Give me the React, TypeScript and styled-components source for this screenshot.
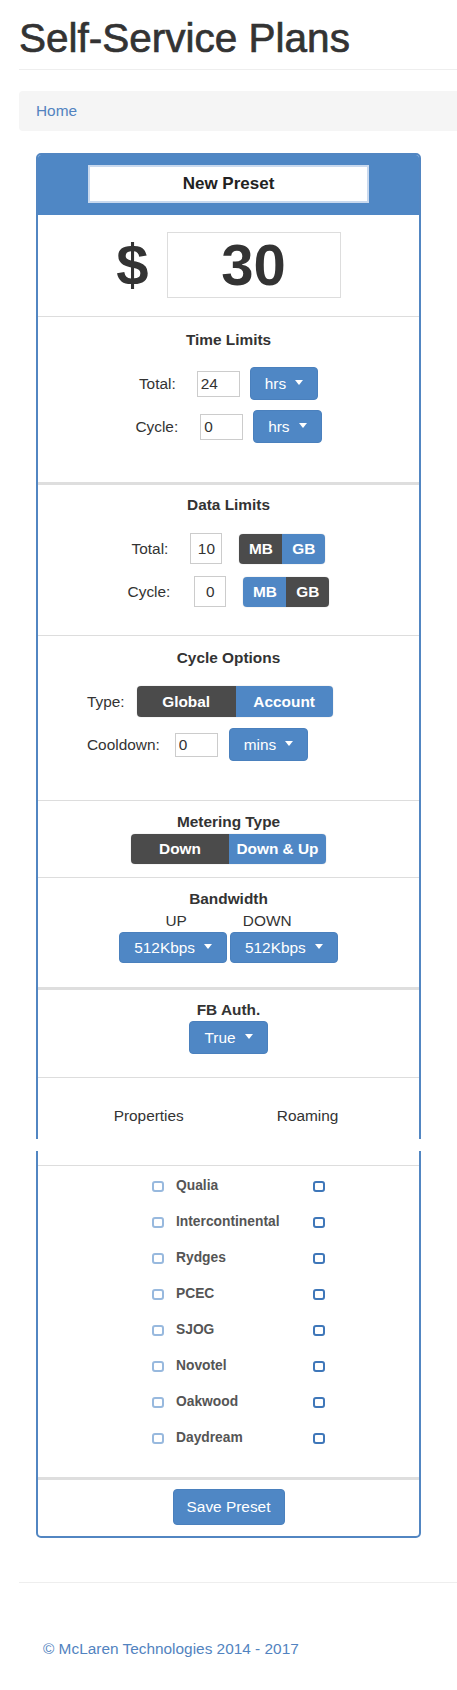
import React from "react";
import styled, { createGlobalStyle } from "styled-components";

const BLUE = "#4f87c5";
const DARK = "#4b4b4b";

const Global = createGlobalStyle`
  html, body { margin: 0; padding: 0; background: #fff; }
  body {
    font-family: "Liberation Sans", Arial, Helvetica, sans-serif;
    font-size: 15.4px;
    line-height: 22px;
    color: #333;
  }
  * { box-sizing: border-box; }
`;

const Page = styled.div`
  width: 457px;
  overflow: hidden;
  padding-bottom: 31px;
`;

const Header = styled.header`
  padding-left: 19px;
`;

const Title = styled.h1`
  margin: 16px 0 0;
  padding-bottom: 9px;
  border-bottom: 1px solid #eee;
  font-size: 40.5px;
  line-height: 44px;
  font-weight: 400;
  color: #333;
  -webkit-text-stroke: 0.7px #333;
`;

const Breadcrumb = styled.nav`
  margin-top: 21px;
  height: 40px;
  padding: 0 17px;
  display: flex;
  align-items: center;
  background: #f5f5f5;
  border-radius: 4px 0 0 4px;
`;

const Link = styled.a`
  color: #5283c0;
  text-decoration: none;
`;

const Panel = styled.section`
  width: 385px;
  margin: 22px auto 0;
  border: 2px solid #5286c2;
  border-radius: 5px;
  background: #fff;
`;

const PanelHeader = styled.div`
  background: ${BLUE};
  padding: 10px 0 12px;
  display: flex;
  justify-content: center;
  border-radius: 3px 3px 0 0;
`;

const NameInput = styled.input`
  width: 281px;
  height: 38px;
  border: 2px solid #c9d9ee;
  background: #fff;
  text-align: center;
  font-family: inherit;
  font-weight: 700;
  font-size: 17px;
  color: #222;
  outline: none;
`;

const PriceSection = styled.div`
  padding: 17px 0 18px;
  display: flex;
  justify-content: center;
  align-items: center;
  gap: 18px;
  border-bottom: 1px solid #ddd;
`;

const Dollar = styled.span`
  font-size: 58px;
  line-height: 66px;
  font-weight: 700;
  color: #333;
`;

const PriceBox = styled.div`
  width: 174px;
  height: 66px;
  border: 1px solid #ddd;
  display: flex;
  align-items: center;
  justify-content: center;
  font-size: 58px;
  font-weight: 700;
  color: #333;
`;

const Section = styled.div<{ $top: number; $bottom: number; $thick?: boolean; $first?: boolean }>`
  border-top: ${(p) => (p.$first ? "none" : p.$thick ? "3px solid #dedede" : "1px solid #ddd")};
  padding: ${(p) => p.$top}px 0 ${(p) => p.$bottom}px;
  display: flex;
  flex-direction: column;
  align-items: stretch;
`;

const SectionTitle = styled.h4`
  margin: 0;
  font-size: 15.4px;
  line-height: 22px;
  font-weight: 700;
  text-align: center;
  color: #333;
`;

const Row = styled.div<{ $mt: number; $left?: number }>`
  margin-top: ${(p) => p.$mt}px;
  display: flex;
  align-items: center;
  justify-content: ${(p) => (p.$left !== undefined ? "flex-start" : "center")};
  padding-left: ${(p) => p.$left ?? 0}px;
`;

const Label = styled.span<{ $gap: number }>`
  margin-right: ${(p) => p.$gap}px;
`;

const SmallInput = styled.input<{ $w: number; $h: number; $center?: boolean; $gap: number }>`
  width: ${(p) => p.$w}px;
  height: ${(p) => p.$h}px;
  margin-right: ${(p) => p.$gap}px;
  border: 1px solid #ccc;
  padding: 0 3px;
  font-family: inherit;
  font-size: 15.4px;
  color: #333;
  text-align: ${(p) => (p.$center ? "center" : "left")};
  outline: none;
  background: #fff;
`;

const DropButton = styled.button<{ $h?: number }>`
  height: ${(p) => p.$h ?? 33}px;
  padding: 0 14px;
  display: inline-flex;
  align-items: center;
  gap: 9px;
  border: 1px solid #4a80bd;
  border-radius: 4px;
  background: ${BLUE};
  color: #fff;
  font-family: inherit;
  font-size: 15.4px;
  cursor: pointer;
`;

const Caret = styled.span`
  width: 0;
  height: 0;
  border-top: 5px solid #fff;
  border-left: 4.5px solid transparent;
  border-right: 4.5px solid transparent;
  margin-top: -2px;
`;

const ToggleGroup = styled.div`
  display: inline-flex;
  border-radius: 4px;
  overflow: hidden;
  box-shadow: 0 0 1px rgba(0, 0, 0, 0.35);
`;

const ToggleBtn = styled.button<{ $active?: boolean; $w: number; $h: number }>`
  width: ${(p) => p.$w}px;
  height: ${(p) => p.$h}px;
  border: none;
  padding: 0;
  background: ${(p) => (p.$active ? BLUE : DARK)};
  color: #fff;
  font-family: inherit;
  font-weight: 700;
  font-size: 15.4px;
`;

const SubLabels = styled.div`
  display: flex;
  justify-content: center;
  gap: 56px;
`;

const ButtonPair = styled.div`
  display: flex;
  justify-content: center;
  gap: 3px;
`;

const Centered = styled.div`
  display: flex;
  justify-content: center;
`;

const PropHeader = styled.div`
  border-top: 1px solid #ddd;
  padding: 27px 5px 12px 0;
  display: flex;
  justify-content: center;
  gap: 93px;
`;

const BorderGap = styled.div`
  height: 12px;
  margin: 0 -2px 14px;
  background: #fff;
`;

const PropList = styled.div`
  border-top: 1px solid #ddd;
  padding: 2px 0 21px 114px;
`;

const PropRow = styled.div`
  height: 36px;
  display: grid;
  grid-template-columns: 161px 12px;
  align-items: center;
`;

const PropCell = styled.div`
  display: flex;
  align-items: center;
  gap: 12px;
`;

const Check = styled.span<{ $strong?: boolean }>`
  width: 12px;
  height: 11px;
  border-radius: 3px;
  border: ${(p) => (p.$strong ? "2px solid #3f77b9" : "2px solid #98b9de")};
  background: #fff;
`;

const PropName = styled.span`
  font-weight: 700;
  font-size: 13.8px;
  color: #555;
`;

const SaveSection = styled.div`
  border-top: 3px solid #dedede;
  padding: 9px 0 11px;
  display: flex;
  justify-content: center;
`;

const SaveButton = styled.button`
  width: 112px;
  height: 36px;
  border: 1px solid #4a80bd;
  border-radius: 4px;
  background: ${BLUE};
  color: #fff;
  font-family: inherit;
  font-size: 15.4px;
`;

const FooterRule = styled.hr`
  margin: 44px 0 0 19px;
  border: none;
  border-top: 1px solid #eee;
`;

const FooterText = styled.p`
  margin: 55px 0 0;
  padding-left: 43px;
  color: #5283c0;
`;

const properties = [
  "Qualia",
  "Intercontinental",
  "Rydges",
  "PCEC",
  "SJOG",
  "Novotel",
  "Oakwood",
  "Daydream",
];

const Drop = ({ label, h }: { label: string; h?: number }) => (
  <DropButton $h={h}>
    {label}
    <Caret />
  </DropButton>
);

export default function App() {
  return (
    <Page>
      <Global />
      <Header>
        <Title>Self-Service Plans</Title>
        <Breadcrumb>
          <Link href="#">Home</Link>
        </Breadcrumb>
      </Header>

      <Panel>
        <PanelHeader>
          <NameInput value="New Preset" readOnly />
        </PanelHeader>

        <PriceSection>
          <Dollar>$</Dollar>
          <PriceBox>30</PriceBox>
        </PriceSection>

        <Section $first $top={12} $bottom={39}>
          <SectionTitle>Time Limits</SectionTitle>
          <Row $mt={16}>
            <Label $gap={21}>Total:</Label>
            <SmallInput $w={43} $h={26} $gap={10} value="24" readOnly />
            <Drop label="hrs" />
          </Row>
          <Row $mt={10}>
            <Label $gap={22}>Cycle:</Label>
            <SmallInput $w={43} $h={26} $gap={10} value="0" readOnly />
            <Drop label="hrs" />
          </Row>
        </Section>

        <Section $thick $top={9} $bottom={28}>
          <SectionTitle>Data Limits</SectionTitle>
          <Row $mt={17}>
            <Label $gap={22}>Total:</Label>
            <SmallInput $w={32} $h={31} $gap={17} $center value="10" readOnly />
            <ToggleGroup>
              <ToggleBtn $w={43} $h={30}>MB</ToggleBtn>
              <ToggleBtn $w={43} $h={30} $active>GB</ToggleBtn>
            </ToggleGroup>
          </Row>
          <Row $mt={12}>
            <Label $gap={24}>Cycle:</Label>
            <SmallInput $w={32} $h={31} $gap={17} $center value="0" readOnly />
            <ToggleGroup>
              <ToggleBtn $w={43} $h={30} $active>MB</ToggleBtn>
              <ToggleBtn $w={43} $h={30}>GB</ToggleBtn>
            </ToggleGroup>
          </Row>
        </Section>

        <Section $top={11} $bottom={39}>
          <SectionTitle>Cycle Options</SectionTitle>
          <Row $mt={17} $left={49}>
            <Label $gap={12}>Type:</Label>
            <ToggleGroup>
              <ToggleBtn $w={99} $h={31}>Global</ToggleBtn>
              <ToggleBtn $w={97} $h={31} $active>Account</ToggleBtn>
            </ToggleGroup>
          </Row>
          <Row $mt={11} $left={49}>
            <Label $gap={15}>Cooldown:</Label>
            <SmallInput $w={43} $h={24} $gap={11} value="0" readOnly />
            <Drop label="mins" />
          </Row>
        </Section>

        <Section $top={10} $bottom={13}>
          <SectionTitle>Metering Type</SectionTitle>
          <Row $mt={1}>
            <ToggleGroup>
              <ToggleBtn $w={98} $h={30}>Down</ToggleBtn>
              <ToggleBtn $w={97} $h={30} $active>Down &amp; Up</ToggleBtn>
            </ToggleGroup>
          </Row>
        </Section>

        <Section $top={10} $bottom={24}>
          <SectionTitle>Bandwidth</SectionTitle>
          <SubLabels>
            <span>UP</span>
            <span>DOWN</span>
          </SubLabels>
          <ButtonPair>
            <Drop label="512Kbps" h={31} />
            <Drop label="512Kbps" h={31} />
          </ButtonPair>
        </Section>

        <Section $thick $top={9} $bottom={23}>
          <SectionTitle>FB Auth.</SectionTitle>
          <Centered>
            <Drop label="True" />
          </Centered>
        </Section>

        <PropHeader>
          <span>Properties</span>
          <span>Roaming</span>
        </PropHeader>
        <BorderGap />

        <PropList>
          {properties.map((name) => (
            <PropRow key={name}>
              <PropCell>
                <Check />
                <PropName>{name}</PropName>
              </PropCell>
              <Check $strong />
            </PropRow>
          ))}
        </PropList>

        <SaveSection>
          <SaveButton>Save Preset</SaveButton>
        </SaveSection>
      </Panel>

      <FooterRule />
      <FooterText>© McLaren Technologies 2014 - 2017</FooterText>
    </Page>
  );
}
